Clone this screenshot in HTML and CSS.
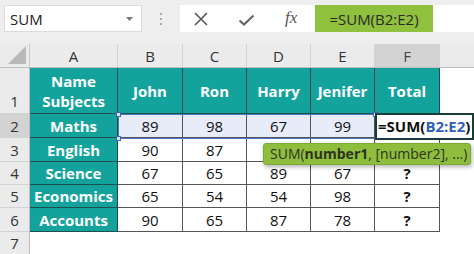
FILE: index.html
```html
<!DOCTYPE html>
<html>
<head>
<meta charset="utf-8">
<link rel="stylesheet" href="styles.css">
</head>
<body>
<div class="app">
  <div class="fbar">
    <div class="namebox">
      <span>SUM</span>
      <svg class="caret" width="7" height="4" viewBox="0 0 7 4"><path d="M0 0h7L3.5 4z" fill="#777"/></svg>
    </div>
    <div class="sep"><i></i><i></i><i></i></div>
    <div class="fx-area">
      <div class="icons">
        <svg class="ic-x" width="14" height="14" viewBox="0 0 14 14"><path d="M1 1l12 12M13 1L1 13" stroke="#555" stroke-width="1.6" fill="none"/></svg>
        <svg class="ic-check" width="17" height="12" viewBox="0 0 17 12"><path d="M1.5 6.5l4.5 4L15.5 1.5" stroke="#666" stroke-width="2.2" fill="none"/></svg>
        <span class="ic-fx">fx</span>
      </div>
      <div class="formula">=SUM(B2:E2)</div>
    </div>
  </div>
  <div class="sheet">
    <div class="corner"><svg width="18" height="18" viewBox="0 0 18 18"><path d="M18 0V18H0z" fill="#b9b9b9"/></svg></div>
    <div class="ch">A</div><div class="ch">B</div><div class="ch">C</div><div class="ch">D</div><div class="ch">E</div><div class="ch ch-act">F</div><div class="ch ch-end"></div>

    <div class="rh rh-tall">1</div>
    <div class="tc"><span>Name<br>Subjects</span></div><div class="tc">John</div><div class="tc">Ron</div><div class="tc">Harry</div><div class="tc">Jenifer</div><div class="tc">Total</div><div class="blank"></div>

    <div class="rh rh-act">2</div>
    <div class="tc">Maths</div><div class="dc sel">89</div><div class="dc sel">98</div><div class="dc sel">67</div><div class="dc sel">99</div><div class="dc"></div><div class="blank"></div>

    <div class="rh">3</div>
    <div class="tc">English</div><div class="dc">90</div><div class="dc">87</div><div class="dc"></div><div class="dc"></div><div class="dc"></div><div class="blank"></div>

    <div class="rh">4</div>
    <div class="tc">Science</div><div class="dc">67</div><div class="dc">65</div><div class="dc">89</div><div class="dc">67</div><div class="dc q">?</div><div class="blank"></div>

    <div class="rh">5</div>
    <div class="tc">Economics</div><div class="dc">65</div><div class="dc">54</div><div class="dc">54</div><div class="dc">98</div><div class="dc q">?</div><div class="blank"></div>

    <div class="rh">6</div>
    <div class="tc">Accounts</div><div class="dc">90</div><div class="dc">65</div><div class="dc">87</div><div class="dc">78</div><div class="dc q">?</div><div class="blank"></div>

    <div class="rh rh-last">7</div>
    <div class="blank span7"></div>

    <div class="selbox"><i class="h h-tl"></i><i class="h h-bl"></i><i class="h h-tr"></i></div>
    <div class="editor">=SUM(<span class="ref">B2:E2</span>)</div>
    <div class="tip">SUM(<b>number1</b>, [number2], ...)</div>
  </div>
</div>
</body>
</html>
```

FILE: styles.css
```css
* { box-sizing: border-box; }
html, body { margin: 0; padding: 0; }
body {
  width: 474px;
  height: 254px;
  overflow: hidden;
  background: #fff;
  font-family: "Open Sans", "Noto Sans", sans-serif;
  color: #222;
}
.app { width: 474px; height: 254px; overflow: hidden; }

/* formula bar */
.fbar {
  height: 44px;
  background: #eeeeee;
  display: flex;
  align-items: flex-start;
  padding: 5px 0 0 4px;
}
.namebox {
  width: 138px;
  height: 27px;
  background: #fff;
  border: 1px solid #dcdcdc;
  display: flex;
  align-items: center;
  justify-content: space-between;
  padding: 0 8px 0 5px;
  font-size: 15px;
  color: #222;
}
.caret { margin-top: 1px; }
.sep {
  width: 38px;
  height: 27px;
  display: flex;
  flex-direction: column;
  align-items: center;
  justify-content: center;
  gap: 3px;
}
.sep i { display: block; width: 2px; height: 2px; background: #aaa; }
.fx-area {
  flex: 1;
  height: 27px;
  background: #fff;
  display: flex;
}
.icons {
  width: 135px;
  display: flex;
  align-items: center;
}
.ic-x { margin-left: 14px; }
.ic-check { margin-left: 30px; margin-top: 2px; }
.ic-fx {
  margin-left: 30px;
  font-family: "Liberation Serif", "DejaVu Serif", serif;
  font-style: italic;
  font-size: 17px;
  color: #555;
  margin-top: -2px;
}
.formula {
  width: 118px;
  background: #8fc03e;
  font-size: 15px;
  color: #2a2a2a;
  display: flex;
  align-items: center;
  justify-content: center;
}

/* sheet */
.sheet {
  position: relative;
  display: grid;
  grid-template-columns: 30px 88px 65px 64px 64px 64px 65px 34px;
  grid-template-rows: 24px 46px 24px 24px 23px 23px 24px 22px;
  font-size: 15px;
}
.corner {
  background: #ebebeb;
  border-right: 1px solid #c9c9c9;
  border-bottom: 1px solid #bdbdbd;
  display: flex;
  align-items: flex-end;
  justify-content: flex-end;
  padding: 0 3px 3px 0;
}
.ch {
  background: #ebebeb;
  border-right: 1px solid #d2d2d2;
  border-bottom: 1px solid #bdbdbd;
  display: flex;
  align-items: center;
  justify-content: center;
  color: #333;
  font-size: 15px;
}
.ch-act { background: #d3d3d3; color: #444; }
.ch-end { border-right: none; }
.rh {
  background: #ebebeb;
  border-right: 1px solid #bdbdbd;
  border-bottom: 1px solid #d2d2d2;
  display: flex;
  align-items: center;
  justify-content: center;
  color: #333;
  font-size: 15px;
}
.rh-tall { align-items: flex-end; padding-bottom: 2px; }
.rh-act { background: #d3d3d3; }
.rh-last { border-bottom: none; }
.tc {
  background: #14a39c;
  color: #fff;
  font-weight: 700;
  border-right: 1px solid #1d4f4c;
  border-bottom: 1px solid #1d4f4c;
  display: flex;
  align-items: center;
  justify-content: center;
  text-align: center;
  line-height: 20px;
}
.dc {
  background: #fff;
  border-right: 1px solid #555;
  border-bottom: 1px solid #555;
  display: flex;
  align-items: center;
  justify-content: center;
  color: #111;
}
.dc.sel { background: #e7edf8; }
.q { font-weight: 700; }
.blank { background: #fff; }
.span7 { grid-column: span 7; }

/* overlays */
.selbox {
  position: absolute;
  left: 118px;
  top: 70px;
  width: 258px;
  height: 25px;
  border: 1px solid #4a78c8;
}
.h {
  position: absolute;
  width: 5px;
  height: 5px;
  background: #dfe7f5;
  border: 1px solid #3d68b8;
}
.h-tl { left: -3px; top: -3px; }
.h-bl { left: -3px; bottom: -3px; }
.h-tr { right: -3px; top: -3px; }
.editor {
  position: absolute;
  left: 375px;
  top: 69px;
  width: 99px;
  height: 27px;
  background: #fff;
  border: 2px solid #1b3b39;
  font-weight: 700;
  font-size: 15px;
  line-height: 23px;
  padding-left: 1px;
  white-space: nowrap;
  color: #111;
}
.ref { color: #2f62b8; }
.tip {
  position: absolute;
  left: 263px;
  top: 99px;
  width: 208px;
  height: 22px;
  background: #8fbd3d;
  border: 1px solid #7ea735;
  border-radius: 3px;
  box-shadow: 1px 2px 4px rgba(0,0,0,0.3);
  font-size: 14px;
  line-height: 20px;
  padding-left: 6px;
  color: #2e3320;
  white-space: nowrap;
}
.tip b { font-weight: 700; }
```
